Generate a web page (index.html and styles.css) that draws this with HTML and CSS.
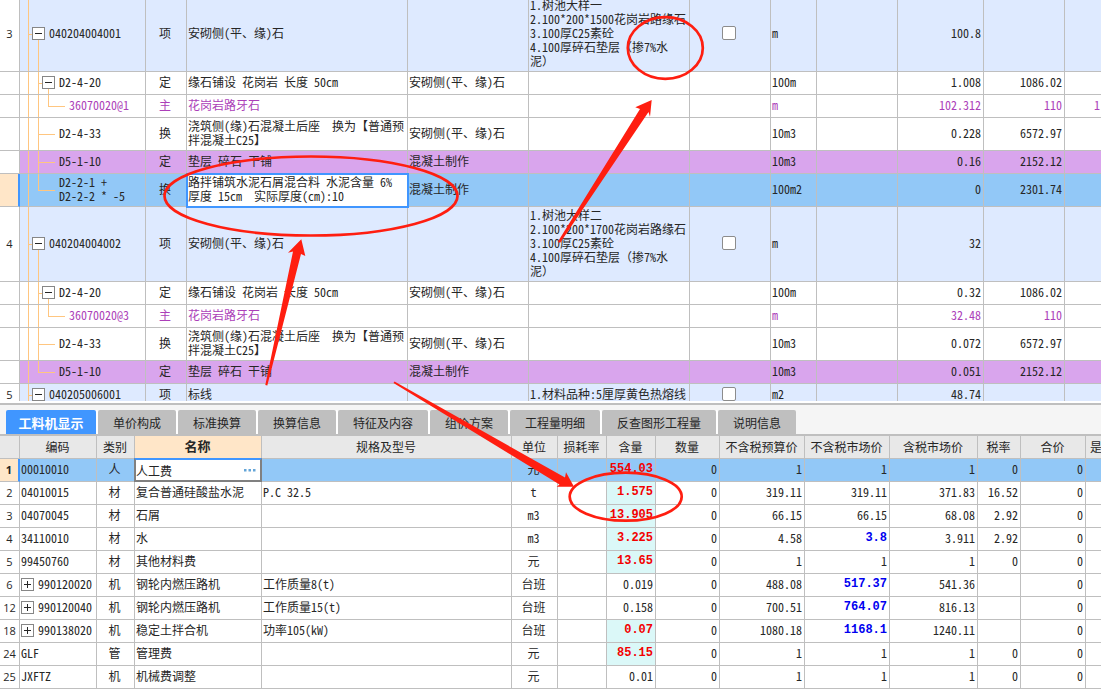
FILE: index.html
```html
<!DOCTYPE html>
<html lang="zh-CN">
<head>
<meta charset="utf-8">
<title>工料机显示</title>
<link rel="stylesheet" href="styles.css">
</head>
<body>
<main class="workspace">
<section class="bill-pane">
<table class="grid bill">
<colgroup><col class="w20"><col class="w126"><col class="w41"><col class="w221"><col class="w121"><col class="w161"><col class="w81"><col class="w46"><col class="w81"><col class="w86"><col class="w81"><col></colgroup>
<tbody>
<tr class="item tall"><th scope="row">3</th><td class="tree root"><div class="node"><button class="toggle" type="button" aria-label="折叠 040204004001"></button><span>040204004001</span></div></td><td class="mid">项</td><td>安砌侧(平、缘)石</td><td></td><td>1.树池大样一<br>2.100*200*1500花岗岩路缘石<br>3.100厚C25素砼<br>4.100厚碎石垫层（掺7%水<br>泥）</td><td class="mid"><input type="checkbox" aria-label="选择 040204004001"></td><td>m</td><td></td><td class="num">100.8</td><td></td><td></td></tr>
<tr><th scope="row"></th><td class="tree branch"><div class="node"><button class="toggle" type="button" aria-label="折叠 D2-4-20"></button><span>D2-4-20</span></div></td><td class="mid">定</td><td>缘石铺设 花岗岩 长度 50cm</td><td>安砌侧(平、缘)石</td><td></td><td></td><td>100m</td><td></td><td class="num">1.008</td><td class="num">1086.02</td><td></td></tr>
<tr class="material"><th scope="row"></th><td class="tree deep">36070020@1</td><td class="mid">主</td><td>花岗岩路牙石</td><td></td><td></td><td></td><td>m</td><td></td><td class="num">102.312</td><td class="num">110</td><td class="num">1</td></tr>
<tr class="double"><th scope="row"></th><td class="tree leaf">D2-4-33</td><td class="mid">换</td><td>浇筑侧(缘)石混凝土后座　换为【普通预<br>拌混凝土C25】</td><td>安砌侧(平、缘)石</td><td></td><td></td><td>10m3</td><td></td><td class="num">0.228</td><td class="num">6572.97</td><td></td></tr>
<tr class="marked"><th scope="row"></th><td class="tree leaf">D5-1-10</td><td class="mid">定</td><td>垫层 碎石 干铺</td><td>混凝土制作</td><td></td><td></td><td>10m3</td><td></td><td class="num">0.16</td><td class="num">2152.12</td><td></td></tr>
<tr class="double current"><th scope="row"></th><td class="tree leaf last">D2-2-1 +<br>D2-2-2 * -5</td><td class="mid">换</td><td class="focus">路拌铺筑水泥石屑混合料 水泥含量 6%<br>厚度 15cm　实际厚度(cm):10</td><td>混凝土制作</td><td></td><td></td><td>100m2</td><td></td><td class="num">0</td><td class="num">2301.74</td><td></td></tr>
<tr class="item tall"><th scope="row">4</th><td class="tree root"><div class="node"><button class="toggle" type="button" aria-label="折叠 040204004002"></button><span>040204004002</span></div></td><td class="mid">项</td><td>安砌侧(平、缘)石</td><td></td><td>1.树池大样二<br>2.100*200*1700花岗岩路缘石<br>3.100厚C25素砼<br>4.100厚碎石垫层（掺7%水<br>泥）</td><td class="mid"><input type="checkbox" aria-label="选择 040204004002"></td><td>m</td><td></td><td class="num">32</td><td></td><td></td></tr>
<tr><th scope="row"></th><td class="tree branch"><div class="node"><button class="toggle" type="button" aria-label="折叠 D2-4-20"></button><span>D2-4-20</span></div></td><td class="mid">定</td><td>缘石铺设 花岗岩 长度 50cm</td><td>安砌侧(平、缘)石</td><td></td><td></td><td>100m</td><td></td><td class="num">0.32</td><td class="num">1086.02</td><td></td></tr>
<tr class="material"><th scope="row"></th><td class="tree deep">36070020@3</td><td class="mid">主</td><td>花岗岩路牙石</td><td></td><td></td><td></td><td>m</td><td></td><td class="num">32.48</td><td class="num">110</td><td></td></tr>
<tr class="double"><th scope="row"></th><td class="tree leaf">D2-4-33</td><td class="mid">换</td><td>浇筑侧(缘)石混凝土后座　换为【普通预<br>拌混凝土C25】</td><td>安砌侧(平、缘)石</td><td></td><td></td><td>10m3</td><td></td><td class="num">0.072</td><td class="num">6572.97</td><td></td></tr>
<tr class="marked"><th scope="row"></th><td class="tree leaf last">D5-1-10</td><td class="mid">定</td><td>垫层 碎石 干铺</td><td>混凝土制作</td><td></td><td></td><td>10m3</td><td></td><td class="num">0.051</td><td class="num">2152.12</td><td></td></tr>
<tr class="item"><th scope="row">5</th><td class="tree root"><div class="node"><button class="toggle" type="button" aria-label="折叠 040205006001"></button><span>040205006001</span></div></td><td class="mid">项</td><td>标线</td><td></td><td>1.材料品种:5厘厚黄色热熔线</td><td class="mid"><input type="checkbox" aria-label="选择 040205006001"></td><td>m2</td><td></td><td class="num">48.74</td><td></td><td></td></tr>
</tbody>
</table>
</section>
<nav class="tabs">
<button type="button" class="tab active">工料机显示</button>
<button type="button" class="tab">单价构成</button>
<button type="button" class="tab">标准换算</button>
<button type="button" class="tab">换算信息</button>
<button type="button" class="tab">特征及内容</button>
<button type="button" class="tab">组价方案</button>
<button type="button" class="tab">工程量明细</button>
<button type="button" class="tab">反查图形工程量</button>
<button type="button" class="tab">说明信息</button>
</nav>
<section class="resource-pane">
<table class="grid resources">
<colgroup><col class="w20"><col class="w77"><col class="w38"><col class="w127"><col class="w250"><col class="w46"><col class="w49"><col class="w49"><col class="w64"><col class="w85"><col class="w85"><col class="w88"><col class="w43"><col class="w65"><col></colgroup>
<thead>
<tr><th></th><th scope="col">编码</th><th scope="col">类别</th><th scope="col" class="sorted">名称</th><th scope="col">规格及型号</th><th scope="col">单位</th><th scope="col">损耗率</th><th scope="col">含量</th><th scope="col">数量</th><th scope="col">不含税预算价</th><th scope="col">不含税市场价</th><th scope="col">含税市场价</th><th scope="col">税率</th><th scope="col">合价</th><th scope="col" class="cut">是</th></tr>
</thead>
<tbody>
<tr class="current"><th scope="row">1</th><td>00010010</td><td class="mid">人</td><td class="editing"><div class="editor"><input type="text" value="人工费" aria-label="名称"><button type="button" aria-label="更多"><svg width="12" height="3" viewBox="0 0 12 3"><path d="M0 0h2.500v2.500H0zM4.500 0H7v2.500H4.500zM9 0h2.500v2.500H9z" fill="#64a5d8"/></svg></button></div></td><td></td><td class="mid">元</td><td></td><td class="num changed">554.03</td><td class="num">0</td><td class="num">1</td><td class="num">1</td><td class="num">1</td><td class="num">0</td><td class="num">0</td><td></td></tr>
<tr><th scope="row">2</th><td>04010015</td><td class="mid">材</td><td>复合普通硅酸盐水泥</td><td>P.C 32.5</td><td class="mid">t</td><td></td><td class="num changed">1.575</td><td class="num">0</td><td class="num">319.11</td><td class="num">319.11</td><td class="num">371.83</td><td class="num">16.52</td><td class="num">0</td><td></td></tr>
<tr><th scope="row">3</th><td>04070045</td><td class="mid">材</td><td>石屑</td><td></td><td class="mid">m3</td><td></td><td class="num changed">13.905</td><td class="num">0</td><td class="num">66.15</td><td class="num">66.15</td><td class="num">68.08</td><td class="num">2.92</td><td class="num">0</td><td></td></tr>
<tr><th scope="row">4</th><td>34110010</td><td class="mid">材</td><td>水</td><td></td><td class="mid">m3</td><td></td><td class="num changed">3.225</td><td class="num">0</td><td class="num">4.58</td><td class="num priced">3.8</td><td class="num">3.911</td><td class="num">2.92</td><td class="num">0</td><td></td></tr>
<tr><th scope="row">5</th><td>99450760</td><td class="mid">材</td><td>其他材料费</td><td></td><td class="mid">元</td><td></td><td class="num changed">13.65</td><td class="num">0</td><td class="num">1</td><td class="num">1</td><td class="num">1</td><td class="num">0</td><td class="num">0</td><td></td></tr>
<tr><th scope="row">6</th><td><div class="node"><button class="toggle closed" type="button" aria-label="展开 990120020"></button><span>990120020</span></div></td><td class="mid">机</td><td>钢轮内燃压路机</td><td>工作质量8(t)</td><td class="mid">台班</td><td></td><td class="num">0.019</td><td class="num">0</td><td class="num">488.08</td><td class="num priced">517.37</td><td class="num">541.36</td><td></td><td class="num">0</td><td></td></tr>
<tr><th scope="row">12</th><td><div class="node"><button class="toggle closed" type="button" aria-label="展开 990120040"></button><span>990120040</span></div></td><td class="mid">机</td><td>钢轮内燃压路机</td><td>工作质量15(t)</td><td class="mid">台班</td><td></td><td class="num">0.158</td><td class="num">0</td><td class="num">700.51</td><td class="num priced">764.07</td><td class="num">816.13</td><td></td><td class="num">0</td><td></td></tr>
<tr><th scope="row">18</th><td><div class="node"><button class="toggle closed" type="button" aria-label="展开 990138020"></button><span>990138020</span></div></td><td class="mid">机</td><td>稳定土拌合机</td><td>功率105(kW)</td><td class="mid">台班</td><td></td><td class="num changed">0.07</td><td class="num">0</td><td class="num">1080.18</td><td class="num priced">1168.1</td><td class="num">1240.11</td><td></td><td class="num">0</td><td></td></tr>
<tr><th scope="row">24</th><td>GLF</td><td class="mid">管</td><td>管理费</td><td></td><td class="mid">元</td><td></td><td class="num changed">85.15</td><td class="num">0</td><td class="num">1</td><td class="num">1</td><td class="num">1</td><td class="num">0</td><td class="num">0</td><td></td></tr>
<tr><th scope="row">25</th><td>JXFTZ</td><td class="mid">机</td><td>机械费调整</td><td></td><td class="mid">元</td><td></td><td class="num">0.01</td><td class="num">0</td><td class="num">1</td><td class="num">1</td><td class="num">1</td><td class="num">0</td><td class="num">0</td><td></td></tr>
</tbody>
</table>
</section>
<svg class="markup" width="1101" height="699" viewBox="0 0 1101 699" aria-hidden="true">
<g fill="none" stroke="#ff1e10" stroke-width="2.700">
<ellipse cx="665.300" cy="48" rx="37.500" ry="30.800"/>
<ellipse cx="311" cy="196" rx="146.500" ry="39.500"/>
<ellipse cx="625.700" cy="496.700" rx="56" ry="24"/>
</g>
<g fill="#ff1e10">
<path d="M651.700 100L635.300 107.300L640 109L558 241.500L560 243L648.500 112L650 116.700Z"/>
<path d="M301.300 239.300L288 252.700L293 251.500L265.300 385L267.300 385.500L301 254L305.300 256Z"/>
<path d="M574 486.700L566 472.300L565 477.500L394.500 381.500L393.500 383L559.500 484.500L556.700 486.700Z"/>
</g>
</svg>
</main>
</body>
</html>
```
FILE: styles.css
```css
:root {
  --line: #bfbfbf;
  --accent: #4096ff;
  --guide: #ffc680;
  --text: #262626;
}

* { box-sizing: border-box; }

body {
  margin: 0;
  background: #fff;
  color: var(--text);
  font: 12px/14px "Noto Sans Mono CJK SC", "Noto Sans CJK SC", monospace;
}

button, input { font: inherit; color: inherit; margin: 0; padding: 0; }

.workspace {
  position: relative;
  min-height: 100vh;
  overflow: hidden;
}

.bill-pane { height: 401px; overflow: hidden; }
.bill { margin-top: -3px; }

.grid {
  width: 100%;
  table-layout: fixed;
  border-collapse: separate;
  border-spacing: 0;
}

.grid td, .grid th {
  height: 23px;
  padding: 0 2px 2px 1px;
  border-right: 1px solid var(--line);
  border-bottom: 1px solid var(--line);
  white-space: nowrap;
  overflow: hidden;
  vertical-align: middle;
}

.grid td:last-child, .grid th:last-child { padding-right: 1px; border-right: 0; }

.grid th { font-weight: 400; text-align: center; }

.grid tbody th {
  padding: 0;
  background-color: #fff;
  font: 11px/14px "Open Sans", sans-serif;
}

.tall td { height: 75px; }
.double td { height: 33px; }
.grid .mid { padding-right: 3px; text-align: center; }
.num { text-align: right; }

.w20 { width: 20px; }
.w38 { width: 38px; }
.w41 { width: 41px; }
.w43 { width: 43px; }
.w46 { width: 46px; }
.w49 { width: 49px; }
.w64 { width: 64px; }
.w65 { width: 65px; }
.w77 { width: 77px; }
.w81 { width: 81px; }
.w85 { width: 85px; }
.w86 { width: 86px; }
.w88 { width: 88px; }
.w121 { width: 121px; }
.w126 { width: 126px; }
.w127 { width: 127px; }
.w161 { width: 161px; }
.w221 { width: 221px; }
.w250 { width: 250px; }

.item { background-color: #deeaff; }
.material { color: #ac3fb9; }
.marked { background-color: #d9a5ed; }
.current { background-color: #92c8f7; }

.grid .current th {
  background-color: #ffe6c8;
  border-right: 2px solid var(--accent);
  font-weight: 700;
}

.grid .focus {
  background-color: #fff;
  outline: 2px solid var(--accent);
  outline-offset: -1px;
}

/* tree guides */
.tree {
  background-image:
    linear-gradient(var(--guide), var(--guide)),
    linear-gradient(var(--guide), var(--guide)),
    linear-gradient(var(--guide), var(--guide)),
    linear-gradient(var(--guide), var(--guide));
  background-repeat: no-repeat;
  background-origin: border-box;
}
.grid .root {
  padding-left: 12px;
  background-position: 8px 0, 8px 50%, 18px 100%, 0 0;
  background-size: 1px 100%, 4px 1px, 1px 50%, 0 0;
}
.grid .branch {
  padding-left: 22px;
  background-position: 8px 0, 18px 0, 18px 50%, 28px 100%;
  background-size: 1px 100%, 1px 100%, 4px 1px, 1px 50%;
}
.grid .deep {
  padding-left: 49px;
  background-position: 8px 0, 18px 0, 28px 0, 28px 50%;
  background-size: 1px 100%, 1px 100%, 1px 50%, 17px 1px;
}
.grid .leaf {
  padding-left: 39px;
  background-position: 8px 0, 18px 0, 18px 50%, 0 0;
  background-size: 1px 100%, 1px 100%, 17px 1px, 0 0;
}
.grid .last { background-size: 1px 100%, 1px 50%, 17px 1px, 0 0; }

.node { display: flex; align-items: center; gap: 4px; }

.toggle {
  flex: none;
  width: 13px;
  height: 13px;
  border: 1px solid #868686;
  background: linear-gradient(var(--text), var(--text)) center / 7px 1px no-repeat #fff;
}
.closed {
  background:
    linear-gradient(var(--text), var(--text)) center / 7px 1px no-repeat,
    linear-gradient(var(--text), var(--text)) center / 1px 7px no-repeat #fff;
}

input[type="checkbox"] {
  appearance: none;
  display: block;
  width: 14px;
  height: 14px;
  margin: 0 auto;
  border: 1px solid #8c8c8c;
  border-radius: 2px;
  background: #fff;
}

.tabs {
  display: flex;
  gap: 2px;
  margin-top: 2px;
  padding: 5px 6px 0;
  border-top: 2px solid var(--line);
  border-bottom: 2px solid var(--line);
  background: #f5f5f5;
}
.tab {
  height: 24px;
  padding: 2px 15px 0;
  border: 0;
  border-radius: 2px 2px 0 0;
  background: #bfbfbf;
  box-shadow: 2px 0 #fff;
  white-space: nowrap;
}
.tab:last-child { box-shadow: none; }
.active {
  width: 90px;
  padding: 2px 0 0;
  background: var(--accent);
  color: #fff;
  font-size: 13px;
  font-weight: 700;
}

.resources thead th { padding-bottom: 0; background-color: #e8e8e8; }
.resources thead .sorted {
  padding-bottom: 2px;
  background-color: #ffe6c8;
  font-size: 13px;
  font-weight: 700;
}
.resources thead .cut { text-align: left; padding-left: 4px; }

.changed, .priced {
  font-family: "Liberation Mono", monospace;
  font-weight: 700;
}
.changed { color: #f30000; background-color: #dbf8f8; }
.current .changed { background-color: transparent; }
.priced { color: #0000f0; }

.grid .editing { padding: 0; overflow: visible; }
.editor {
  display: flex;
  align-items: center;
  height: 24px;
  margin: -1px;
  border: 2px solid #808080;
  border-top-color: var(--accent);
  background: #fff;
}
.editor input {
  flex: 1;
  min-width: 0;
  height: 18px;
  border: 0;
  outline: 0;
  background: transparent;
}
.editor button {
  display: flex;
  padding: 0 4px;
  border: 0;
  background: transparent;
}

.markup { position: absolute; top: 0; left: 0; pointer-events: none; }
```
